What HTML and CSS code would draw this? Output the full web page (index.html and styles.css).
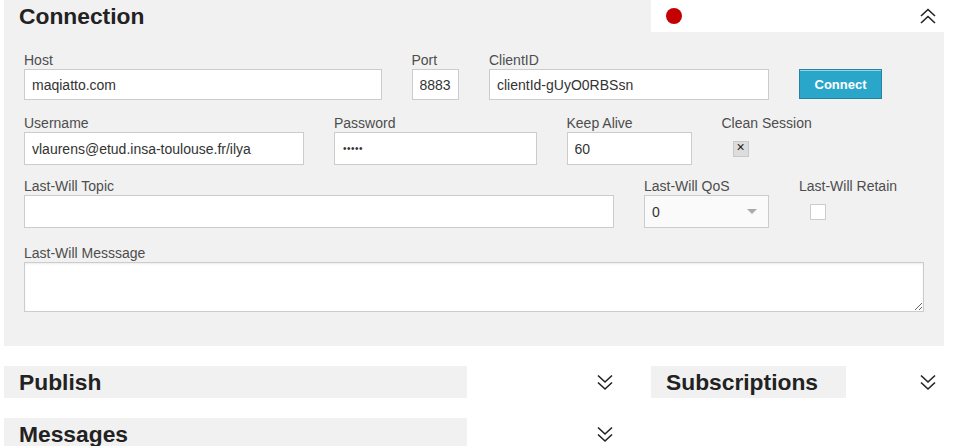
FILE: index.html
```html
<!DOCTYPE html>
<html lang="en">
<head>
<meta charset="utf-8">
<title>MQTT Client</title>
<link rel="stylesheet" href="styles.css">
</head>
<body>
<div class="page">
  <section class="panel">
    <header class="conn-head">
      <h2 class="title conn-title">Connection</h2>
      <div class="conn-status">
        <span class="dot"></span>
        <svg class="chev" width="16" height="17" viewBox="0 0 16 17"><polyline points="1,8 8,1.5 15,8"/><polyline points="1,15 8,8.5 15,15"/></svg>
      </div>
    </header>
    <div class="conn-body">
      <div class="row r1">
        <div class="cell s5"><label class="lbl">Host</label><input class="field short" type="text" value="maqiatto.com"></div>
        <div class="cell s1"><label class="lbl">Port</label><input class="field short" type="text" value="8883"></div>
        <div class="cell s4"><label class="lbl">ClientID</label><input class="field short" type="text" value="clientId-gUyO0RBSsn"></div>
        <div class="cell s2 btn-cell"><button class="connect" type="button">Connect</button></div>
      </div>
      <div class="row r2">
        <div class="cell s4"><label class="lbl">Username</label><input class="field" type="text" value="vlaurens@etud.insa-toulouse.fr/ilya"></div>
        <div class="cell s3"><label class="lbl">Password</label><input class="field pw" type="password" value="12345"></div>
        <div class="cell s2"><label class="lbl">Keep Alive</label><input class="field" type="text" value="60"></div>
        <div class="cell s3"><label class="lbl">Clean Session</label><span class="check checked">×</span></div>
      </div>
      <div class="row r3">
        <div class="cell s8"><label class="lbl">Last-Will Topic</label><input class="field" type="text" value=""></div>
        <div class="cell s2"><label class="lbl">Last-Will QoS</label><div class="select"><span>0</span><span class="caret"></span></div></div>
        <div class="cell s2"><label class="lbl">Last-Will Retain</label><span class="check"></span></div>
      </div>
      <div class="row r4">
        <div class="cell s12"><label class="lbl">Last-Will Messsage</label><textarea class="area"></textarea></div>
      </div>
    </div>
  </section>

  <div class="lower">
    <div class="col-left">
      <section class="sec">
        <h2 class="title sec-title">Publish</h2>
        <svg class="chev" width="16" height="17" viewBox="0 0 16 17"><polyline points="1,1.5 8,8 15,1.5"/><polyline points="1,8.5 8,15 15,8.5"/></svg>
      </section>
      <section class="sec">
        <h2 class="title sec-title">Messages</h2>
        <svg class="chev" width="16" height="17" viewBox="0 0 16 17"><polyline points="1,1.5 8,8 15,1.5"/><polyline points="1,8.5 8,15 15,8.5"/></svg>
      </section>
    </div>
    <div class="col-right">
      <section class="sec">
        <h2 class="title sec-title narrow">Subscriptions</h2>
        <svg class="chev" width="16" height="17" viewBox="0 0 16 17"><polyline points="1,1.5 8,8 15,1.5"/><polyline points="1,8.5 8,15 15,8.5"/></svg>
      </section>
    </div>
  </div>
</div>
</body>
</html>
```
FILE: styles.css
```css
* { box-sizing: border-box; }

html, body {
  margin: 0;
  padding: 0;
  background: #ffffff;
  font-family: "Liberation Sans", Arial, sans-serif;
  color: #333333;
}

.page {
  width: 940px;
  margin-left: 4px;
}

.title {
  margin: 0;
  padding-left: 15px;
  font-size: 22.8px;
  line-height: 32px;
  font-weight: bold;
  color: #222222;
  background: #f1f1f1;
}

/* Connection panel */
.conn-head {
  display: flex;
  height: 32px;
}

.conn-title {
  width: 647px;
  flex: none;
}

.conn-status {
  flex: 1;
  display: flex;
  align-items: center;
  justify-content: space-between;
  padding: 0 8px 0 15px;
  background: #ffffff;
}

.dot {
  width: 16px;
  height: 16px;
  border-radius: 50%;
  background: #c40000;
  margin-top: -1px;
}

.chev {
  flex: none;
  display: block;
}

.chev polyline {
  fill: none;
  stroke: #222222;
  stroke-width: 1.6;
}

.conn-body {
  background: #f1f1f1;
  padding: 19px 5px 34px 5px;
}

.row {
  display: grid;
  grid-template-columns: repeat(12, 1fr);
}

.r1 { margin-bottom: 14px; }
.r2 { margin-bottom: 12px; }
.r3 { margin-bottom: 16px; }

.cell { padding: 0 15px; }
.s1 { grid-column: span 1; }
.s2 { grid-column: span 2; }
.s3 { grid-column: span 3; }
.s4 { grid-column: span 4; }
.s5 { grid-column: span 5; }
.s8 { grid-column: span 8; }
.s12 { grid-column: span 12; }

.lbl {
  display: block;
  font-size: 14px;
  line-height: 18px;
  color: #4d4d4d;
  white-space: nowrap;
}

.field {
  display: block;
  width: 100%;
  height: 33px;
  margin: 0;
  padding: 0 7px;
  border: 1px solid #cccccc;
  border-radius: 0;
  background: #ffffff;
  font: 14px "Liberation Sans", Arial, sans-serif;
  color: #333333;
  outline: none;
}

.field.short { height: 31px; }

.field.pw {
  padding-left: 8px;
  font-size: 10px;
  letter-spacing: 0.5px;
}

.btn-cell { padding-top: 18px; }

.connect {
  display: block;
  width: 83px;
  height: 30px;
  margin: 0;
  padding: 0;
  border: 1px solid #2284a1;
  background: #2ba6cb;
  box-shadow: inset 0 1px 0 rgba(255, 255, 255, 0.5);
  color: #ffffff;
  font: bold 13px "Liberation Sans", Arial, sans-serif;
}

.check {
  display: flex;
  align-items: center;
  justify-content: center;
  width: 16px;
  height: 16px;
  margin: 9px 0 0 11px;
  border: 1px solid #cccccc;
  background: #ffffff;
  font-size: 14px;
  line-height: 14px;
  color: #222222;
}

.check.checked {
  background: #dddddd;
  border-color: #c8c8c8;
  padding-bottom: 4px;
}

.select {
  display: flex;
  align-items: center;
  justify-content: space-between;
  height: 33px;
  padding: 0 11px 0 7px;
  border: 1px solid #cccccc;
  background: #fafafa;
  font-size: 14px;
  color: #333333;
}

.caret {
  width: 0;
  height: 0;
  border-left: 5px solid transparent;
  border-right: 5px solid transparent;
  border-top: 5px solid #aaaaaa;
}

.area {
  display: block;
  width: 100%;
  height: 50px;
  margin: 0;
  padding: 6px 7px;
  border: 1px solid #cccccc;
  border-radius: 0;
  background: #ffffff;
  box-shadow: inset 0 1px 2px rgba(0, 0, 0, 0.08);
  font: 14px "Liberation Sans", Arial, sans-serif;
  outline: none;
}

/* Lower sections */
.lower {
  display: flex;
  gap: 30px;
  margin-top: 20px;
}

.col-left {
  width: 617px;
  display: flex;
  flex-direction: column;
  gap: 20px;
}

.col-right {
  width: 293px;
}

.sec {
  display: flex;
  align-items: center;
  height: 32px;
}

.sec-title {
  width: 75%;
  flex: none;
}

.sec-title.narrow { width: 66.67%; }

.sec .chev {
  margin-left: auto;
  margin-right: 8px;
}
```
